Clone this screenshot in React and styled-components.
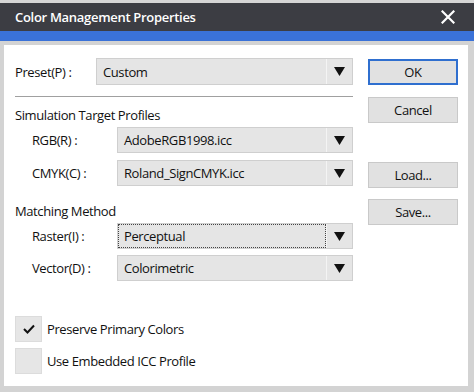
import styled, { createGlobalStyle } from "styled-components";

const GlobalStyle = createGlobalStyle`
    html, body {
        margin: 0;
        padding: 0;
        background: #d9d9d9;
    }
    body {
        font-family: "Open Sans", "Noto Sans", sans-serif;
        font-size: 13px;
        letter-spacing: -0.4px;
        color: #111;
    }
`

const Arrow = () => (
    <svg width="11" height="9" viewBox="0 0 11 9">
        <path d="M0 0 H11 L5.5 9 Z" fill="#111" />
    </svg>
)

const CloseIcon = () => (
    <svg width="14" height="14" viewBox="0 0 14 14">
        <path d="M1.5 1.5 L12.5 12.5 M12.5 1.5 L1.5 12.5" stroke="#fff" strokeWidth="2.2" strokeLinecap="square" />
    </svg>
)

const CheckIcon = () => (
    <svg width="12" height="10" viewBox="0 0 12 10">
        <path d="M1 5 L4.5 8.5 L11 1.5" stroke="#111" strokeWidth="2" fill="none" />
    </svg>
)

const Select = ({ value, focused }) => (
    <SelectBox>
        <SelectText $focused={focused}>{value}</SelectText>
        <ArrowCell><Arrow /></ArrowCell>
    </SelectBox>
)

const App = () => {
    return (
        <>
            <GlobalStyle />
            <Window>
                <TopStrip />
                <TitleBar>
                    <Title>Color Management Properties</Title>
                    <CloseIcon />
                </TitleBar>
                <BlueBand />
                <Frame>
                    <Form>
                        <PresetRow>
                            <Label>Preset(P) :</Label>
                            <Select value="Custom" />
                        </PresetRow>
                        <Separator />
                        <SectionTitle>Simulation Target Profiles</SectionTitle>
                        <Rows>
                            <SubRow>
                                <Label>RGB(R) :</Label>
                                <Select value="AdobeRGB1998.icc" />
                            </SubRow>
                            <SubRow>
                                <Label>CMYK(C) :</Label>
                                <Select value="Roland_SignCMYK.icc" />
                            </SubRow>
                        </Rows>
                        <SectionTitle $top={17}>Matching Method</SectionTitle>
                        <Rows $gap={6}>
                            <SubRow>
                                <Label>Raster(I) :</Label>
                                <Select value="Perceptual" focused />
                            </SubRow>
                            <SubRow>
                                <Label>Vector(D) :</Label>
                                <Select value="Colorimetric" />
                            </SubRow>
                        </Rows>
                        <Checks>
                            <CheckRow>
                                <CheckBox><CheckIcon /></CheckBox>
                                <span>Preserve Primary Colors</span>
                            </CheckRow>
                            <CheckRow>
                                <CheckBox />
                                <span>Use Embedded ICC Profile</span>
                            </CheckRow>
                        </Checks>
                    </Form>
                    <Buttons>
                        <Button $primary>OK</Button>
                        <Button $top={12}>Cancel</Button>
                        <Button $top={39}>Load...</Button>
                        <Button $top={11}>Save...</Button>
                    </Buttons>
                </Frame>
            </Window>
        </>
    )
}

const Window = styled.div`
    width: 474px;
    height: 392px;
    display: flex;
    flex-direction: column;
    overflow: hidden;
`

const TopStrip = styled.div`
    height: 3px;
    background: #d6d6d6;
`

const TitleBar = styled.div`
    height: 28px;
    background: #3c3d43;
    display: flex;
    align-items: center;
    justify-content: space-between;
    padding: 0 19px 0 15px;
`

const Title = styled.div`
    color: #fff;
    font-weight: 600;
    font-size: 13px;
    letter-spacing: -0.3px;
`

const BlueBand = styled.div`
    height: 10px;
    background: #3a72d8;
`

const Frame = styled.div`
    flex: 1;
    display: flex;
    background: #fff;
    border-style: solid;
    border-color: #d3d3d3;
    border-width: 4px 6px 6px 4px;
    padding: 13px 0 0 11px;
    gap: 15px;
`

const Form = styled.div`
    width: 338px;
    display: flex;
    flex-direction: column;
`

const PresetRow = styled.div`
    display: flex;
    align-items: center;
    height: 27px;
    & > span { width: 81px; }
`

const Label = styled.span`
    flex: none;
`

const Separator = styled.div`
    height: 1px;
    background: #a0a0a0;
    margin-top: 11px;
`

const SectionTitle = styled.div`
    margin-top: ${p => p.$top ?? 10}px;
    line-height: 16px;
`

const Rows = styled.div`
    display: flex;
    flex-direction: column;
    gap: ${p => p.$gap ?? 7}px;
    margin-top: 4px;
    padding-left: 17px;
`

const SubRow = styled.div`
    display: flex;
    align-items: center;
    height: 26px;
    & > span { width: 85px; }
`

const SelectBox = styled.div`
    flex: 1;
    height: 100%;
    display: flex;
    background: #e5e5e5;
    border: 1px solid #cfcfcf;
    box-sizing: border-box;
`

const SelectText = styled.div`
    flex: 1;
    display: flex;
    align-items: center;
    padding-left: 5px;
    margin: 1px;
    outline: ${p => p.$focused ? "1px dotted #444" : "none"};
`

const ArrowCell = styled.div`
    width: 25px;
    display: flex;
    align-items: center;
    justify-content: center;
    border-left: 1px solid #f4f4f4;
`

const Buttons = styled.div`
    width: 90px;
    display: flex;
    flex-direction: column;
    padding-top: 1px;
`

const Button = styled.button`
    height: 26px;
    margin-top: ${p => p.$top ?? 0}px;
    font-family: inherit;
    font-size: 13px;
    letter-spacing: -0.4px;
    color: #111;
    background: #e1e1e1;
    border: 1px solid ${p => p.$primary ? "#2f6fcf" : "#c9c9c9"};
    box-shadow: ${p => p.$primary ? "inset 0 0 0 1px #2f6fcf" : "none"};
    padding: 0;
`

const Checks = styled.div`
    display: flex;
    flex-direction: column;
    gap: 6px;
    margin-top: 35px;
`

const CheckRow = styled.div`
    display: flex;
    align-items: center;
    gap: 5px;
`

const CheckBox = styled.div`
    width: 27px;
    height: 26px;
    box-sizing: border-box;
    background: #e6e6e6;
    border: 1px solid #dcdcdc;
    display: flex;
    align-items: center;
    justify-content: center;
`

export default App
